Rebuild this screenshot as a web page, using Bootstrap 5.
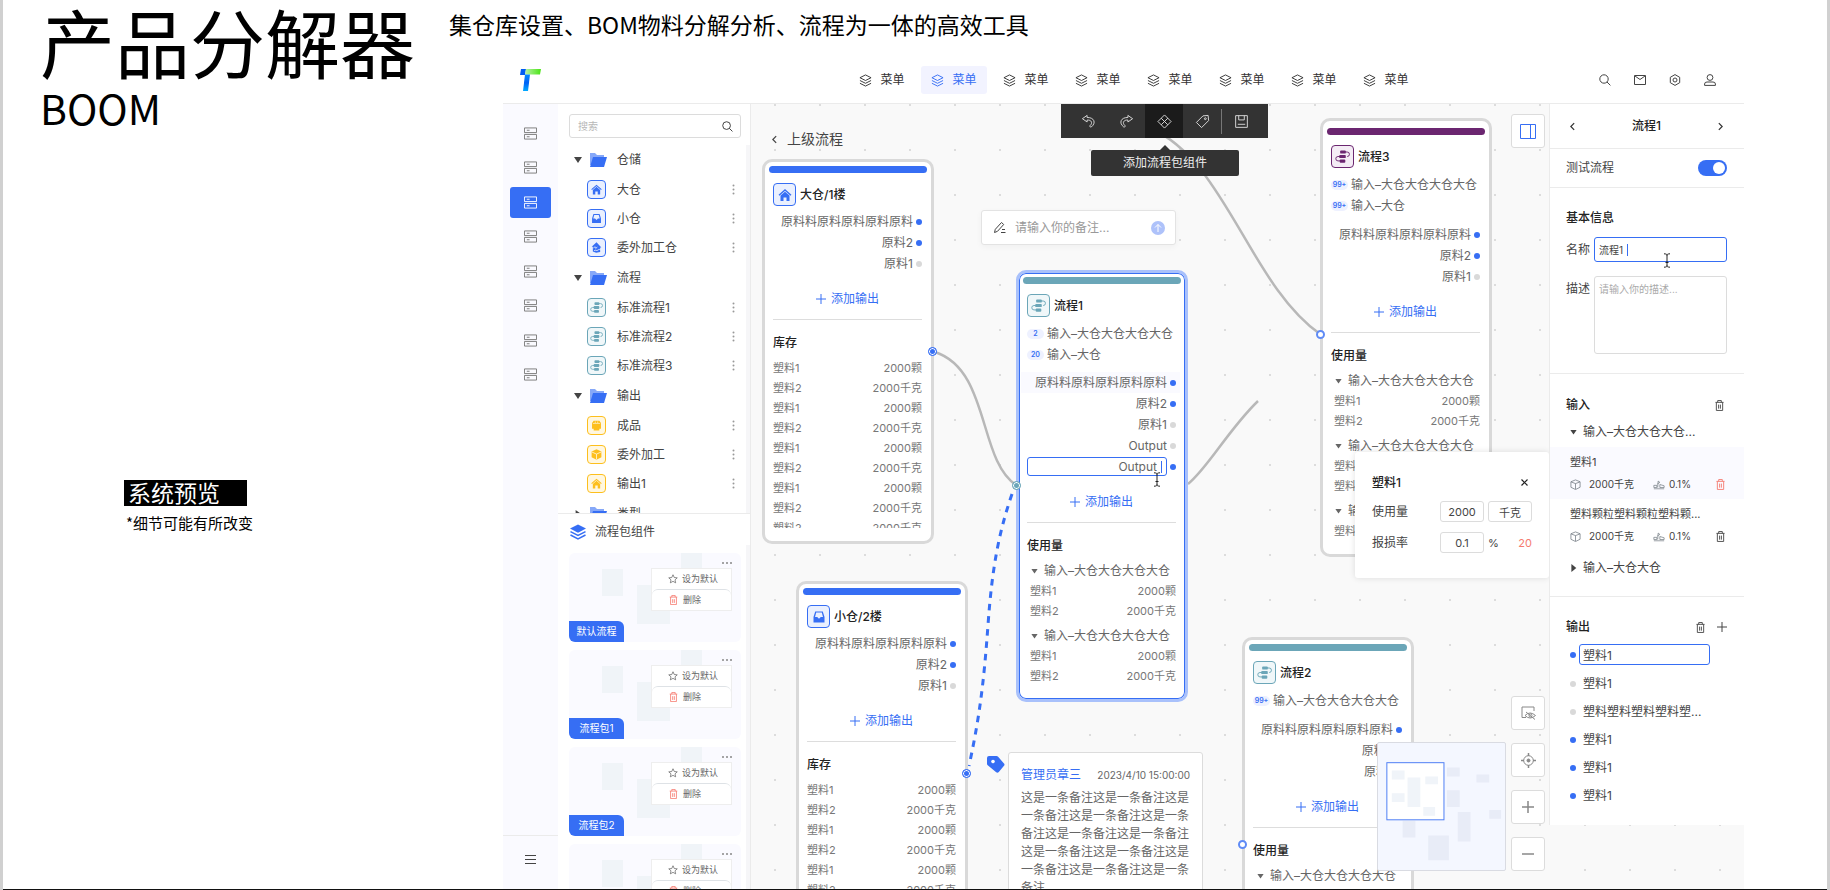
<!DOCTYPE html>
<html lang="zh-CN">
<head>
<meta charset="utf-8">
<meta name="viewport" content="width=device-width, initial-scale=1">
<title>产品分解器 BOOM</title>
<link href="https://cdn.jsdelivr.net/npm/bootstrap@5.3.0/dist/css/bootstrap.min.css" rel="stylesheet">
<style>
:root{--blue:#366ef4;--teal:#6ba6b8;--plum:#6b2670;--gold:#fdbf1d;--line:#ebebeb;--pale:#fafaff}
body{font-family:Inter,"Noto Sans CJK SC",sans-serif;font-size:12px;line-height:20px;color:#444;background:#fff}
.btn,.btn:hover{color:inherit;font-size:inherit;line-height:inherit}
svg{display:block;flex:none;fill:none;stroke:currentColor}
.page{border:solid #d0d0d0;border-width:0 3px}
.page::after{content:"";position:absolute;inset:auto 0 0;height:1px;background:#111;z-index:9}
.cjk{font-family:"Noto Sans CJK SC",sans-serif;color:#000}
.intro{width:446px;padding-left:37px}
.intro h1{font-size:75px;line-height:81px;font-weight:400}
.intro .sub{font-size:41px;line-height:52px}
.preview{margin:347px 0 0 84px}
.preview strong{width:123px;height:26px;padding-left:4px;font-size:23px;line-height:25px;font-weight:400;background:#000;color:#fff}
.preview small{font-size:15px;line-height:24px;padding:5px 0 0 2px}
.lead-line{height:57px;padding-top:8px;font-size:23px;line-height:32px}
.app{margin:0 83px 0 54px}
.top{height:47px;border-bottom:1px solid var(--line)}
.brand{width:346px;padding-left:17px}
.menu a{width:66px;height:28px;gap:8px;color:#333;border-radius:3px}
.menu a.on{background:#f2f3ff;color:var(--blue)}
.tools{gap:23px;padding-right:28px;color:#444}
.rail{width:55px;background:var(--pale);color:#777}
.rail .stack{height:272px;margin-top:14px}
.rail button{width:41px;height:31px;border-radius:3px}
.rail button.on{background:var(--blue);color:#fff}
.rail .foot{height:55px;padding-bottom:8px;border-top:1px solid var(--line);color:#444}
.side{width:193px;border-right:1px solid var(--line);background:#fff}
.search{height:24px;margin:10px 9px 7px 11px;padding:0 7px 0 8px;border:1px solid #dcdcdc;border-radius:3px;color:#333}
.search input{font-size:10px}
.plain{border:0;outline:0;background:none;padding:0;min-width:0;color:inherit}
.plain::placeholder{color:#b8b8b8;opacity:1}
.tree{height:369px;border-bottom:1px solid var(--line)}
.tree>div{margin:0 0 1px}
.tree .dir{height:30px;padding-left:16px}
.tree .dir .tri{width:8px;margin-right:7px}
.tree .dir svg.fold{margin-right:10px;stroke:none}
.tree .leaf{height:29px;padding:0 15px 0 29px}
.tree .leaf .tile{width:19px;height:19px;margin-right:11px}
.tree .leaf button{color:#999}
.tree .leaf button svg{stroke:none;fill:currentColor}
.track::after{content:"";position:absolute;right:0;top:0;bottom:0;width:4px;background:#f6f6f8}
.tri{display:inline-block;width:8px;height:6px;background:currentColor;clip-path:polygon(0 0,100% 0,50% 100%)}
.tri.shut{clip-path:polygon(20% 0,90% 50%,20% 100%);height:8px}
.tile{display:flex;align-items:center;justify-content:center;width:23px;height:23px;flex:none;border:1px solid currentColor;border-radius:4px}
.t-blue{color:var(--blue);background:#eaf0fe}.t-teal{color:var(--teal);background:#f0f7f9}.t-plum{color:var(--plum);background:#f4ecf5}.t-gold{color:var(--gold);background:#fff7e0}
.kit-head{height:31px;padding:4px 0 0 12px;gap:9px}
.kits{padding:8px 9px 0 11px}
.kit{height:89px;margin-bottom:8px;border-radius:6px;background:var(--pale)}
.kit .deco{position:absolute;inset:0;stroke:none;fill:#f0f4f8}
.kit .name{position:absolute;left:0;bottom:0;width:55px;height:21px;border-radius:0 6px 0 6px;background:var(--blue);color:#fff;font-size:10px;line-height:21px;text-align:center}
.kit .pop{position:absolute;left:82px;top:15px;width:81px;border:1px solid #eee;background:#fff;font-size:9px}
.kit .pop button{height:20px;padding-left:16px;gap:4px;color:#666;font-size:9px;line-height:20px}
.kit .pop button+button{height:21px;padding-left:17px;gap:5px}
.kit .more{position:absolute;right:9px;top:6px;color:#888}
.red{color:#f57b70}
.board{background:#f9f9f9 radial-gradient(circle at 1px 1px,#dcdcdc 1px,transparent 1px) 23px 0/45px 45px}
.back{position:absolute;left:21px;top:24px;gap:10px;font-size:14px;line-height:22px;color:#444}
.bar{position:absolute;left:310px;top:0;padding:0 8px;background:#333;color:#ddd;z-index:3}
.bar button{width:38px;height:34px}
.bar button.on{background:#1b1b1b}
.bar i{width:1px;height:25px;background:#777}
.tip{position:absolute;left:340px;top:46px;width:148px;height:26px;line-height:26px;text-align:center;background:#333;color:#eee;border-radius:2px;z-index:3}
.tip::before{content:"";position:absolute;left:69px;top:-5px;border:5px solid transparent;border-top:0;border-bottom-color:#333}
.wires{position:absolute;left:0;top:0}
.node{position:absolute;width:172px;padding:4px 4px 14px;border:3px solid #d9d9d9;border-radius:10px;background:#fff;color:#666}
.node.sel{border-color:#a9c1fb;box-shadow:inset 0 0 0 1px var(--blue)}
.node.tall{padding-top:7px}
.node .cap{height:7px;border-radius:4px}
.node .in{margin:0 5px 0 4px}
.node header{margin:10px 0 5px;gap:4px;color:#222;font-weight:500}
.node .src{height:21px;gap:3px}
.node header+.src{margin-top:6px}
.node .src+.out{margin-top:8px}
.node .src+.hot{margin-top:7px}
.pill{width:17px;height:10px;border-radius:5px;background:#eef1ff;color:var(--blue);font-size:7px;line-height:10px;font-weight:600;text-align:center}
.out{height:21px;gap:3px}
.out.hot{margin-left:-6px;margin-right:-4px;padding-right:4px;background:var(--pale)}
.dot{width:6px;height:6px;border-radius:50%;background:#d9d9d9;flex:none}
.dot.b{background:var(--blue)}
.out .box{height:19px;border:1px solid var(--blue);border-radius:3px;padding-right:9px}
.caret{position:absolute;width:1px;height:12px;background:var(--blue)}
.add,.add:hover{height:21px;margin-top:14px;gap:5px;color:var(--blue)}
.node hr{margin:10px 0 13px;border-color:#ddd;opacity:1}
.node h3,.panel h3{font-size:12px;line-height:20px;font-weight:500;color:#222;margin:0}
.node .clip{margin-top:5px;overflow:hidden}
.node table{width:100%;font-size:11px;color:#777}
.node td{padding:0;height:20px;line-height:20px}
.node td+td{text-align:right}
.node .use table{margin:0 0 5px 3px;width:calc(100% - 3px)}
.node .use .clip table:last-child{margin-bottom:0}
.grp{height:20px;gap:6px;padding-left:4px}
.grp .tri{width:7px;height:5px}
.port{position:absolute;width:9px;height:9px;border:1px solid var(--blue);border-radius:50%;background:var(--blue);box-shadow:inset 0 0 0 1px #fff}
.port.open{background:#fff;border-width:2px;border-color:#5f8bf6}
.port.teal{border-color:var(--teal);background:var(--teal)}
.note{position:absolute;left:230px;top:106px;width:195px;height:35px;padding:0 10px 0 11px;gap:9px;border:1px solid #e3e3e3;border-radius:3px;background:#fff;box-shadow:0 2px 6px #0000000a}
.note input::placeholder{color:#999}
.memo{position:absolute;left:257px;top:648px;width:195px;padding:12px;border:1px solid #dcdcdc;border-radius:3px;background:#fff;color:#666}
.memo time{font-size:10px}
.memo p{line-height:18px;padding-top:4px}
.memo-tag{position:absolute;left:236px;top:652px;stroke:none}
.sq,.sq:hover{width:34px;height:34px;border:1px solid #dcdcdc;border-radius:3px;background:#fff;color:#888}
.sq.tint{color:var(--blue);right:4px;top:10px}
.mid{place-items:center}
.dock{position:absolute;right:4px;bottom:19px;gap:5px}
.dock .col-btns{gap:13px}
.mini{width:129px;height:129px;border:1px solid #d9dbe2;border-radius:2px;background:#f4f7ff;stroke:none}
.tune{position:absolute;right:0;top:348px;width:194px;height:126px;padding:20px 17px 0;border-radius:3px;background:#fff;box-shadow:0 0 6px #0000001f;z-index:4}
.tune .cell{width:44px;height:21px;border:1px solid #dcdcdc;border-radius:3px;text-align:center;font-size:11px;padding:0;color:#444}
.tune .line{height:21px;margin-bottom:10px;gap:4px}
.tune .line:first-child{margin-bottom:8px}
.panel{width:195px;border-left:1px solid var(--line);background:#fff;min-height:721px}
.panel section{border-bottom:1px solid var(--line);padding:0 17px 0 16px}
.panel section:last-child{border:0}
.panel .h45{height:45px;color:#333}
.panel .h39{height:39px}
.sw{width:29px;height:16px;margin:0;appearance:none;border-radius:8px;background:var(--blue)}
.sw::after{content:"";display:block;width:12px;height:12px;margin:2px 0 0 15px;border-radius:50%;background:#fff}
.field{width:133px;border:1px solid #dcdcdc;border-radius:3px;padding:0 4px;font-size:10px;color:#444;outline:0;resize:none;background:#fff}
.field::placeholder{color:#aaa;opacity:1}
.field.on{border-color:var(--blue);height:25px}
textarea.field{height:78px;padding-top:2px}
.item{margin:0 -17px 0 -16px;padding:5px 19px 3px 20px;height:52px;font-size:11px}
.item .nums{font-size:10px;height:24px}
.item .qty{width:64px}
.outs{padding-top:7px}
.outs li{height:21px;margin-bottom:7px;gap:7px;padding-left:4px}
.outs li:first-child{margin-bottom:8px}
.outs .field{width:131px;height:21px;font-size:12px;margin-left:-4px;padding:0 3px}
.beam{position:absolute;stroke:#222;z-index:5}
</style>
</head>
<body>
<svg width="0" height="0" class="position-absolute" aria-hidden="true">
  <symbol id="server" viewBox="0 0 14 13"><path d="M.5.5h13v5H.5zM.5 7.500h13v5H.5zM3 3h3M3 10h3"/></symbol>
  <symbol id="layers" viewBox="0 0 14 14"><path d="M7 1l6 3-6 3-6-3zM1 7l6 3 6-3M1 10l6 3 6-3" stroke-linejoin="round"/></symbol>
  <symbol id="layersfill" viewBox="0 0 16 16"><path d="M8 .5L16 4.600 8 8.700 0 4.600z" fill="currentColor" stroke="none"/><path d="M.5 7.600L8 11.400l7.500-3.800M.5 11L8 14.800l7.500-3.800" stroke-width="1.500"/></symbol>
  <symbol id="search" viewBox="0 0 12 12"><circle cx="5" cy="5" r="4.200"/><path d="M8 8l3.400 3.400"/></symbol>
  <symbol id="home" viewBox="0 0 16 16"><path d="M2 8.200L8 3l6 5.200" stroke-width="1.400"/><path d="M3.500 8.500L8 4.700l4.500 3.800V14h-3v-3.500h-3V14h-3z" fill="currentColor" stroke="none"/></symbol>
  <symbol id="tray" viewBox="0 0 16 16"><path d="M4.200 2.500h7.600L13.500 8v5.500h-11V8z" stroke="none" fill="currentColor"/><path d="M5.200 3.600h5.600L12 8H9.800L8 9.800 6.200 8H4z" fill="#eaf0fe" stroke="none"/></symbol>
  <symbol id="outhome" viewBox="0 0 16 16"><path d="M8 1.500L2 7h1.500v6l4 1.500 5-1V8H14z" fill="currentColor" stroke="none"/><path d="M4 9l2-2 1 2 2-1.500M5 12c2-2 3 1 5-1s2 1 4-1" stroke="#eaf0fe"/></symbol>
  <symbol id="flow" viewBox="0 0 16 16"><g fill="currentColor" stroke="none"><rect x="5.500" y="1.500" width="6" height="3.400" rx="1"/><rect x="4.500" y="6.300" width="7" height="3.400" rx="1"/><rect x="5" y="11.200" width="6" height="3.400" rx="1"/></g><path d="M10 3.200h3a2.300 2.300 0 0 1 0 4.800M6 8H3.200a2.300 2.300 0 0 0 0 4.700H6"/></symbol>
  <symbol id="goods" viewBox="0 0 16 16"><path d="M4.500 2h7l2 3v7h-2v2h-7v-2h-2V5z" fill="currentColor" stroke="none"/><path d="M3.500 5.500h9M6.500 3v2M9.500 3v2" stroke="#fff7e0" stroke-width=".8"/></symbol>
  <symbol id="cube" viewBox="0 0 16 16"><path d="M8 1.500l6 2.800v7.200l-6 3-6-3V4.300z" fill="currentColor" stroke="none"/><path d="M2.500 5L8 7.500 13.500 5M8 7.500V14" stroke="#fff7e0"/></symbol>
  <symbol id="folder" viewBox="0 0 18 14"><path d="M1 0h5l2 2h7v10H1z" fill="#86a8f8"/><path d="M4 4h14l-3 10H1z" fill="#366ef4"/></symbol>
  <symbol id="vdots" viewBox="0 0 3 11"><circle cx="1.500" cy="1.500" r="1"/><circle cx="1.500" cy="5.500" r="1"/><circle cx="1.500" cy="9.500" r="1"/></symbol>
  <symbol id="star" viewBox="0 0 12 12"><path d="M6 .9l1.500 3.300 3.600.4-2.700 2.400.8 3.600L6 8.800l-3.200 1.800.8-3.600L.9 4.600l3.600-.4z" stroke-width=".9"/></symbol>
  <symbol id="trash" viewBox="0 0 10 12"><path d="M.5 2.500h9M3 2.500v-2h4v2M1.500 2.500v9h7v-9M4 5v4.500M6 5v4.500"/></symbol>
  <symbol id="left" viewBox="0 0 6 10"><path d="M5 1L1 5l4 4" stroke-width="1.500"/></symbol>
  <symbol id="plus" viewBox="0 0 10 10"><path d="M5 0v10M0 5h10"/></symbol>
  <symbol id="undo" viewBox="0 0 16 16"><path d="M6.500 1.500L1.500 5l5 3.500V6.500C11 6 13 9.500 9.500 12.500c-.5 1 .8 1.800 1.500 1.300C16.500 9.500 14 3.500 6.500 3.700z" stroke-linejoin="round"/></symbol>
  <symbol id="box" viewBox="0 0 12 12"><path d="M6 1l5 2v6l-5 2.500L1 9V3zM1.200 3.200L6 5l4.800-1.800M6 5v6" stroke-width=".8"/></symbol>
  <symbol id="loss" viewBox="0 0 14 12"><path d="M1 9.500V7h3.500v2.500zM5.500 9.500L6 2l2 1.500-3 2M8 6l5 1.500v2H8zM1 11h12" stroke-width=".8"/></symbol>
  <symbol id="beam" viewBox="0 0 8 15"><path d="M1 .8c2 0 3 .5 3 1.500 0-1 1-1.500 3-1.500M4 2v11M1 14.200c2 0 3-.5 3-1.500 0 1 1 1.500 3 1.500M2.500 9.500h3"/></symbol>
</svg>

<div class="page d-flex vh-100 overflow-hidden position-relative">
  <div class="intro cjk flex-shrink-0">
    <h1 class="m-0 text-nowrap">产品分解器</h1>
    <div class="sub">BOOM</div>
    <div class="preview d-flex flex-column text-nowrap"><strong>系统预览</strong><small>*细节可能有所改变</small></div>
  </div>

  <div class="flex-grow-1 d-flex flex-column" style="min-width:0">
    <p class="lead-line cjk m-0 flex-shrink-0 text-nowrap">集仓库设置、BOM物料分解分析、流程为一体的高效工具</p>
    <div class="app flex-grow-1 d-flex flex-column" style="min-height:0">
      <header class="top d-flex align-items-center flex-shrink-0">
        <a href="#" class="brand flex-shrink-0" aria-label="首页">
          <svg width="21" height="22" viewBox="0 0 21 22" stroke="none"><defs><linearGradient id="gr"><stop offset="0" stop-color="#b8f0a8"/><stop offset="1" stop-color="#4ae514"/></linearGradient><linearGradient id="bl" x2="0" y2="1"><stop offset="0" stop-color="#08f"/><stop offset=".5" stop-color="#0061f5"/><stop offset="1" stop-color="#00a9ff"/></linearGradient></defs><path d="M1 0h5L5 6H0z" fill="#005cf2" stroke="none"/><path d="M6 0h15l-1 5.500H5z" fill="url(#gr)" stroke="none"/><path d="M5 5.500h5L8 22H3z" fill="url(#bl)" stroke="none"/></svg>
        </a>
        <nav class="menu d-flex flex-grow-1" style="gap:6px">
          <a href="#" class="d-flex align-items-center justify-content-center text-decoration-none"><svg width="13" height="13"><use href="#layers"/></svg>菜单</a>
          <a href="#" class="on d-flex align-items-center justify-content-center text-decoration-none"><svg width="13" height="13"><use href="#layers"/></svg>菜单</a>
          <a href="#" class="d-flex align-items-center justify-content-center text-decoration-none"><svg width="13" height="13"><use href="#layers"/></svg>菜单</a>
          <a href="#" class="d-flex align-items-center justify-content-center text-decoration-none"><svg width="13" height="13"><use href="#layers"/></svg>菜单</a>
          <a href="#" class="d-flex align-items-center justify-content-center text-decoration-none"><svg width="13" height="13"><use href="#layers"/></svg>菜单</a>
          <a href="#" class="d-flex align-items-center justify-content-center text-decoration-none"><svg width="13" height="13"><use href="#layers"/></svg>菜单</a>
          <a href="#" class="d-flex align-items-center justify-content-center text-decoration-none"><svg width="13" height="13"><use href="#layers"/></svg>菜单</a>
          <a href="#" class="d-flex align-items-center justify-content-center text-decoration-none"><svg width="13" height="13"><use href="#layers"/></svg>菜单</a>
        </nav>
        <div class="tools d-flex align-items-center">
          <button class="btn p-0 border-0" aria-label="搜索"><svg width="12" height="12"><use href="#search"/></svg></button>
          <button class="btn p-0 border-0" aria-label="邮件"><svg width="12" height="12" viewBox="0 0 12 12"><path d="M.5 1.500h11v9H.5zM1 2l5 3.500L11 2"/></svg></button>
          <button class="btn p-0 border-0" aria-label="设置"><svg width="12" height="12" viewBox="0 0 12 12"><path d="M6 .6l4.700 2.700v5.400L6 11.400 1.300 8.700V3.300z"/><circle cx="6" cy="6" r="2"/></svg></button>
          <button class="btn p-0 border-0" aria-label="用户"><svg width="12" height="12" viewBox="0 0 12 12"><circle cx="6" cy="3.500" r="2.900"/><path d="M.6 11.400V10Q.6 8 3 8h6q2.400 0 2.400 2v1.400z"/></svg></button>
        </div>
      </header>

      <div class="d-flex flex-grow-1" style="min-height:0">
        <nav class="rail d-flex flex-column align-items-center justify-content-between flex-shrink-0">
          <div class="stack d-flex flex-column justify-content-between">
            <button class="mid btn p-0 border-0 d-grid" aria-label="模块1"><svg width="13" height="13"><use href="#server"/></svg></button>
            <button class="mid btn p-0 border-0 d-grid" aria-label="模块2"><svg width="13" height="13"><use href="#server"/></svg></button>
            <button class="on mid btn p-0 border-0 d-grid" aria-label="模块3"><svg width="13" height="13"><use href="#server"/></svg></button>
            <button class="mid btn p-0 border-0 d-grid" aria-label="模块4"><svg width="13" height="13"><use href="#server"/></svg></button>
            <button class="mid btn p-0 border-0 d-grid" aria-label="模块5"><svg width="13" height="13"><use href="#server"/></svg></button>
            <button class="mid btn p-0 border-0 d-grid" aria-label="模块6"><svg width="13" height="13"><use href="#server"/></svg></button>
            <button class="mid btn p-0 border-0 d-grid" aria-label="模块7"><svg width="13" height="13"><use href="#server"/></svg></button>
            <button class="mid btn p-0 border-0 d-grid" aria-label="模块8"><svg width="13" height="13"><use href="#server"/></svg></button>
          </div>
          <div class="foot w-100 d-flex justify-content-center align-items-center"><button class="mid btn p-0 border-0 d-grid" aria-label="展开"><svg width="11" height="9" viewBox="0 0 11 9"><path d="M0 .5h11M0 4.500h11M0 8.500h11"/></svg></button></div>
        </nav>

        <aside class="side d-flex flex-column flex-shrink-0 overflow-hidden">
          <div class="search d-flex align-items-center flex-shrink-0"><input class="plain flex-grow-1" type="search" placeholder="搜索" aria-label="搜索"><svg width="11" height="11"><use href="#search"/></svg></div>
          <div class="tree track position-relative overflow-hidden flex-shrink-0">
            <div>
              <div class="dir d-flex align-items-center"><i class="tri"></i><svg class="fold" width="18" height="14"><use href="#folder"/></svg>仓储</div>
              <div class="leaf d-flex align-items-center"><span class="tile t-blue"><svg width="13" height="13"><use href="#home"/></svg></span>大仓<button class="btn p-0 border-0 ms-auto" aria-label="更多"><svg width="3" height="11"><use href="#vdots"/></svg></button></div>
              <div class="leaf d-flex align-items-center"><span class="tile t-blue"><svg width="13" height="13"><use href="#tray"/></svg></span>小仓<button class="btn p-0 border-0 ms-auto" aria-label="更多"><svg width="3" height="11"><use href="#vdots"/></svg></button></div>
              <div class="leaf d-flex align-items-center"><span class="tile t-blue"><svg width="13" height="13"><use href="#outhome"/></svg></span>委外加工仓<button class="btn p-0 border-0 ms-auto" aria-label="更多"><svg width="3" height="11"><use href="#vdots"/></svg></button></div>
            </div>
            <div>
              <div class="dir d-flex align-items-center"><i class="tri"></i><svg class="fold" width="18" height="14"><use href="#folder"/></svg>流程</div>
              <div class="leaf d-flex align-items-center"><span class="tile t-teal"><svg width="13" height="13"><use href="#flow"/></svg></span>标准流程1<button class="btn p-0 border-0 ms-auto" aria-label="更多"><svg width="3" height="11"><use href="#vdots"/></svg></button></div>
              <div class="leaf d-flex align-items-center"><span class="tile t-teal"><svg width="13" height="13"><use href="#flow"/></svg></span>标准流程2<button class="btn p-0 border-0 ms-auto" aria-label="更多"><svg width="3" height="11"><use href="#vdots"/></svg></button></div>
              <div class="leaf d-flex align-items-center"><span class="tile t-teal"><svg width="13" height="13"><use href="#flow"/></svg></span>标准流程3<button class="btn p-0 border-0 ms-auto" aria-label="更多"><svg width="3" height="11"><use href="#vdots"/></svg></button></div>
            </div>
            <div>
              <div class="dir d-flex align-items-center"><i class="tri"></i><svg class="fold" width="18" height="14"><use href="#folder"/></svg>输出</div>
              <div class="leaf d-flex align-items-center"><span class="tile t-gold"><svg width="13" height="13"><use href="#goods"/></svg></span>成品<button class="btn p-0 border-0 ms-auto" aria-label="更多"><svg width="3" height="11"><use href="#vdots"/></svg></button></div>
              <div class="leaf d-flex align-items-center"><span class="tile t-gold"><svg width="13" height="13"><use href="#cube"/></svg></span>委外加工<button class="btn p-0 border-0 ms-auto" aria-label="更多"><svg width="3" height="11"><use href="#vdots"/></svg></button></div>
              <div class="leaf d-flex align-items-center"><span class="tile t-gold"><svg width="13" height="13"><use href="#home"/></svg></span>输出1<button class="btn p-0 border-0 ms-auto" aria-label="更多"><svg width="3" height="11"><use href="#vdots"/></svg></button></div>
            </div>
            <div class="dir d-flex align-items-center"><i class="tri shut"></i><svg class="fold" width="18" height="14"><use href="#folder"/></svg>类型</div>
          </div>
          <div class="kit-head d-flex align-items-center flex-shrink-0"><svg width="16" height="16" style="color:var(--blue)"><use href="#layersfill"/></svg>流程包组件</div>
          <div class="kits track position-relative flex-grow-1 overflow-hidden">
            <div class="kit position-relative">
              <svg class="deco" width="172" height="89"><path d="M33 16h21v27H33zM112 0h21v20h-21zM68 32h33v39H68z"/></svg>
              <button class="more btn p-0 border-0" aria-label="更多"><svg width="10" height="8" viewBox="0 0 10 8"><path d="M0 4h2M4 4h2M8 4h2" stroke-width="1.500"/></svg></button>
              <div class="pop"><button class="btn border-0 py-0 pe-0 d-flex align-items-center w-100"><svg width="10" height="10"><use href="#star"/></svg>设为默认</button><button class="btn border-0 py-0 pe-0 d-flex align-items-center w-100 border-top"><svg class="red" width="9" height="10"><use href="#trash"/></svg>删除</button></div>
              <span class="name">默认流程</span>
            </div>
            <div class="kit position-relative">
              <svg class="deco" width="172" height="89"><path d="M33 16h21v27H33zM112 0h21v20h-21zM68 32h33v39H68z"/></svg>
              <button class="more btn p-0 border-0" aria-label="更多"><svg width="10" height="8" viewBox="0 0 10 8"><path d="M0 4h2M4 4h2M8 4h2" stroke-width="1.500"/></svg></button>
              <div class="pop"><button class="btn border-0 py-0 pe-0 d-flex align-items-center w-100"><svg width="10" height="10"><use href="#star"/></svg>设为默认</button><button class="btn border-0 py-0 pe-0 d-flex align-items-center w-100 border-top"><svg class="red" width="9" height="10"><use href="#trash"/></svg>删除</button></div>
              <span class="name">流程包1</span>
            </div>
            <div class="kit position-relative">
              <svg class="deco" width="172" height="89"><path d="M33 16h21v27H33zM112 0h21v20h-21zM68 32h33v39H68z"/></svg>
              <button class="more btn p-0 border-0" aria-label="更多"><svg width="10" height="8" viewBox="0 0 10 8"><path d="M0 4h2M4 4h2M8 4h2" stroke-width="1.500"/></svg></button>
              <div class="pop"><button class="btn border-0 py-0 pe-0 d-flex align-items-center w-100"><svg width="10" height="10"><use href="#star"/></svg>设为默认</button><button class="btn border-0 py-0 pe-0 d-flex align-items-center w-100 border-top"><svg class="red" width="9" height="10"><use href="#trash"/></svg>删除</button></div>
              <span class="name">流程包2</span>
            </div>
            <div class="kit position-relative">
              <svg class="deco" width="172" height="89"><path d="M33 16h21v27H33zM112 0h21v20h-21zM68 32h33v39H68z"/></svg>
              <button class="more btn p-0 border-0" aria-label="更多"><svg width="10" height="8" viewBox="0 0 10 8"><path d="M0 4h2M4 4h2M8 4h2" stroke-width="1.500"/></svg></button>
              <div class="pop"><button class="btn border-0 py-0 pe-0 d-flex align-items-center w-100"><svg width="10" height="10"><use href="#star"/></svg>设为默认</button><button class="btn border-0 py-0 pe-0 d-flex align-items-center w-100 border-top"><svg class="red" width="9" height="10"><use href="#trash"/></svg>删除</button></div>
            </div>
          </div>
        </aside>

        <div class="board d-flex flex-grow-1 align-items-start overflow-hidden">
          <main class="position-relative flex-grow-1 h-100 overflow-hidden">
            <a href="#" class="back d-flex align-items-center text-decoration-none"><svg width="5" height="9"><use href="#left"/></svg>上级流程</a>

            <svg class="wires" width="798" height="785" viewBox="751 104 798 785">
              <path d="M1150 128C1225 160 1250 285 1320 334M1188 484C1208 468 1228 430 1258 401M935 352C990 370 978 460 1016 485" stroke="#b8b8b8" stroke-width="2.500"/>
              <path d="M1012 494C998 535 992 570 988 625S980 715 969 766" stroke="#366ef4" stroke-width="3" stroke-dasharray="6.500 6"/>
            </svg>

            <div class="bar d-flex align-items-center">
              <button class="mid btn p-0 border-0 rounded-0 d-grid" aria-label="撤销"><svg width="15" height="15"><use href="#undo"/></svg></button>
              <button class="mid btn p-0 border-0 rounded-0 d-grid" aria-label="重做"><svg width="15" height="15" viewBox="0 0 16 16"><path d="M9.500 1.500l5 3.500-5 3.500V6.500C5 6 3 9.500 6.500 12.500c.5 1-.8 1.800-1.500 1.300C-.5 9.500 2 3.500 9.500 3.700z" stroke-linejoin="round"/></svg></button>
              <button class="on mid btn p-0 border-0 rounded-0 d-grid" aria-label="添加流程包组件"><svg width="15" height="15" viewBox="0 0 16 16"><path d="M8 1l7 7-7 7-7-7zM4.500 4.500l7 7M11.500 4.500l-7 7"/></svg></button>
              <button class="mid btn p-0 border-0 rounded-0 d-grid" aria-label="标签"><svg width="15" height="15" viewBox="0 0 16 16"><path d="M8.500 2L14 1.500 14.500 7 7 14.500 1.500 9z" stroke-linejoin="round"/><circle cx="11" cy="5" r="1"/></svg></button>
              <i></i>
              <button class="mid btn p-0 border-0 rounded-0 d-grid" aria-label="保存"><svg width="13" height="13" viewBox="0 0 14 14"><path d="M.7.700h12.600v12.600H.7zM4 .7v4.600h6V.7M3 10h8"/></svg></button>
            </div>
            <div class="tip" role="tooltip">添加流程包组件</div>

            <label class="note d-flex align-items-center"><svg width="13" height="13" viewBox="0 0 13 13"><path d="M1.500 11.500l.8-3.200L8.500 1.500l2.200 2L4.500 10.300zM8 11.500h4.500M9 8.500h3"/></svg><input class="plain flex-grow-1" placeholder="请输入你的备注..."><svg width="14" height="14" viewBox="0 0 14 14"><circle cx="7" cy="7" r="7" fill="#aec2fa" stroke="none"/><path d="M7 11V3.500M4 6.500l3-3 3 3" stroke="#fff"/></svg></label>

            <article class="node" style="left:11px;top:55px;height:385px">
              <div class="cap" style="background:var(--blue)"></div>
              <div class="in">
                <header class="d-flex align-items-center"><span class="tile t-blue"><svg width="16" height="16"><use href="#home"/></svg></span>大仓/1楼</header>
                <div class="out d-flex align-items-center justify-content-end">原料料原料原料原料原料<i class="dot b"></i></div>
                <div class="out d-flex align-items-center justify-content-end">原料2<i class="dot b"></i></div>
                <div class="out d-flex align-items-center justify-content-end">原料1<i class="dot"></i></div>
                <button class="add btn w-100 p-0 border-0 d-flex align-items-center justify-content-center"><svg width="10" height="10"><use href="#plus"/></svg>添加输出</button>
                <hr>
                <h3>库存</h3>
                <div class="clip" style="height:170px"><table>
                  <tr><td>塑料1</td><td>2000颗</td></tr><tr><td>塑料2</td><td>2000千克</td></tr>
                  <tr><td>塑料1</td><td>2000颗</td></tr><tr><td>塑料2</td><td>2000千克</td></tr>
                  <tr><td>塑料1</td><td>2000颗</td></tr><tr><td>塑料2</td><td>2000千克</td></tr>
                  <tr><td>塑料1</td><td>2000颗</td></tr><tr><td>塑料2</td><td>2000千克</td></tr>
                  <tr><td>塑料2</td><td>2000千克</td></tr>
                </table></div>
              </div>
              <i class="port" style="right:-6px;top:185px"></i>
            </article>

            <article class="node" style="left:45px;top:477px;height:385px">
              <div class="cap" style="background:var(--blue)"></div>
              <div class="in">
                <header class="d-flex align-items-center"><span class="tile t-blue"><svg width="16" height="16"><use href="#tray"/></svg></span>小仓/2楼</header>
                <div class="out d-flex align-items-center justify-content-end">原料料原料原料原料原料<i class="dot b"></i></div>
                <div class="out d-flex align-items-center justify-content-end">原料2<i class="dot b"></i></div>
                <div class="out d-flex align-items-center justify-content-end">原料1<i class="dot"></i></div>
                <button class="add btn w-100 p-0 border-0 d-flex align-items-center justify-content-center"><svg width="10" height="10"><use href="#plus"/></svg>添加输出</button>
                <hr>
                <h3>库存</h3>
                <div class="clip" style="height:170px"><table>
                  <tr><td>塑料1</td><td>2000颗</td></tr><tr><td>塑料2</td><td>2000千克</td></tr>
                  <tr><td>塑料1</td><td>2000颗</td></tr><tr><td>塑料2</td><td>2000千克</td></tr>
                  <tr><td>塑料1</td><td>2000颗</td></tr><tr><td>塑料2</td><td>2000千克</td></tr>
                </table></div>
              </div>
              <i class="port" style="right:-6px;top:185px"></i>
            </article>

            <article class="node sel" style="left:265px;top:166px;height:432px">
              <div class="cap" style="background:var(--teal)"></div>
              <div class="in use">
                <header class="d-flex align-items-center"><span class="tile t-teal"><svg width="15" height="15"><use href="#flow"/></svg></span>流程1</header>
                <div class="src d-flex align-items-center"><span class="pill">2</span>输入–大仓大仓大仓大仓</div>
                <div class="src d-flex align-items-center"><span class="pill">20</span>输入–大仓</div>
                <div class="out hot d-flex align-items-center justify-content-end">原料料原料原料原料原料<i class="dot b"></i></div>
                <div class="out d-flex align-items-center justify-content-end">原料2<i class="dot b"></i></div>
                <div class="out d-flex align-items-center justify-content-end">原料1<i class="dot"></i></div>
                <div class="out d-flex align-items-center justify-content-end">Output<i class="dot"></i></div>
                <div class="out d-flex align-items-center justify-content-end position-relative"><input class="plain box flex-grow-1 text-end" value="Output" aria-label="输出名称"><i class="caret" style="right:14px"></i><i class="dot b"></i></div>
                <button class="add btn w-100 p-0 border-0 d-flex align-items-center justify-content-center"><svg width="10" height="10"><use href="#plus"/></svg>添加输出</button>
                <hr>
                <h3>使用量</h3>
                <div class="clip">
                  <div class="grp d-flex align-items-center"><i class="tri"></i>输入–大仓大仓大仓大仓</div>
                  <table><tr><td>塑料1</td><td>2000颗</td></tr><tr><td>塑料2</td><td>2000千克</td></tr></table>
                  <div class="grp d-flex align-items-center"><i class="tri"></i>输入–大仓大仓大仓大仓</div>
                  <table><tr><td>塑料1</td><td>2000颗</td></tr><tr><td>塑料2</td><td>2000千克</td></tr></table>
                </div>
              </div>
              <i class="port teal" style="left:-7px;top:208px"></i>
            </article>
            <svg class="beam" width="8" height="15" style="left:402px;top:368px"><use href="#beam"/></svg>

            <article class="node tall" style="left:569px;top:14px;height:439px">
              <div class="cap" style="background:var(--plum)"></div>
              <div class="in use">
                <header class="d-flex align-items-center"><span class="tile t-plum"><svg width="15" height="15"><use href="#flow"/></svg></span>流程3</header>
                <div class="src d-flex align-items-center"><span class="pill">99+</span>输入–大仓大仓大仓大仓</div>
                <div class="src d-flex align-items-center"><span class="pill">99+</span>输入–大仓</div>
                <div class="out d-flex align-items-center justify-content-end">原料料原料原料原料原料<i class="dot b"></i></div>
                <div class="out d-flex align-items-center justify-content-end">原料2<i class="dot b"></i></div>
                <div class="out d-flex align-items-center justify-content-end">原料1<i class="dot"></i></div>
                <button class="add btn w-100 p-0 border-0 d-flex align-items-center justify-content-center"><svg width="10" height="10"><use href="#plus"/></svg>添加输出</button>
                <hr>
                <h3>使用量</h3>
                <div class="clip" style="height:171px">
                  <div class="grp d-flex align-items-center"><i class="tri"></i>输入–大仓大仓大仓大仓</div>
                  <table><tr><td>塑料1</td><td>2000颗</td></tr><tr><td>塑料2</td><td>2000千克</td></tr></table>
                  <div class="grp d-flex align-items-center"><i class="tri"></i>输入–大仓大仓大仓大仓</div>
                  <table><tr><td>塑料1</td><td></td></tr><tr><td>塑料2</td><td></td></tr></table>
                  <div class="grp d-flex align-items-center"><i class="tri"></i>输入–大仓</div>
                  <table><tr><td>塑料1</td><td></td></tr></table>
                </div>
              </div>
              <i class="port open" style="left:-7px;top:209px"></i>
            </article>

            <article class="node" style="left:491px;top:533px;height:400px">
              <div class="cap" style="background:var(--teal)"></div>
              <div class="in use">
                <header class="d-flex align-items-center"><span class="tile t-teal"><svg width="15" height="15"><use href="#flow"/></svg></span>流程2</header>
                <div class="src d-flex align-items-center"><span class="pill">99+</span>输入–大仓大仓大仓大仓</div>
                <div class="out d-flex align-items-center justify-content-end">原料料原料原料原料原料<i class="dot b"></i></div>
                <div class="out d-flex align-items-center justify-content-end">原料2<i class="dot b"></i></div>
                <div class="out d-flex align-items-center justify-content-end">原料1<i class="dot"></i></div>
                <button class="add btn w-100 p-0 border-0 d-flex align-items-center justify-content-center"><svg width="10" height="10"><use href="#plus"/></svg>添加输出</button>
                <hr>
                <h3>使用量</h3>
                <div class="clip"><div class="grp d-flex align-items-center"><i class="tri"></i>输入–大仓大仓大仓大仓</div></div>
              </div>
              <i class="port open" style="left:-7px;top:200px"></i>
            </article>

            <svg class="memo-tag" width="18" height="18" viewBox="0 0 18 18"><path d="M2 0h7.500q1 0 1.600.7L17 7.500q1 1.200 0 2.300L11.800 16q-1.300 1.200-2.600.2L1 9.500Q0 8.800 0 8V2q0-2 2-2z" fill="#366ef4"/><circle cx="6" cy="5.500" r="1.800" fill="#fff"/></svg>
            <article class="memo">
              <div class="d-flex align-items-center justify-content-between"><a href="#" class="text-decoration-none" style="color:var(--blue)">管理员章三</a><time>2023/4/10 15:00:00</time></div>
              <p class="m-0">这是一条备注这是一条备注这是一条备注这是一条备注这是一条备注这是一条备注这是一条备注这是一条备注这是一条备注这是一条备注这是一条备注这是一条备注</p>
            </article>

            <button class="sq tint mid btn p-0 d-grid position-absolute" aria-label="侧栏"><svg width="16" height="15" viewBox="0 0 16 15"><path d="M.5.5h15v14H.5zM10.500.5v14"/></svg></button>

            <div class="dock d-flex align-items-end">
              <svg class="mini" viewBox="0 0 129 129"><path fill="#e8ecf7" d="M70 25h13v9H70zM100 32h13v8h-13zM70 48h13v17H70zM81 70h13v30H81zM113 68h12v9h-12zM25 79h13v17H25zM51 94h21v25H51z"/><rect x="9" y="20" width="58" height="58" fill="#fff" stroke="#4d7ef5"/><path fill="#f0f4f9" d="M14 28h13v9H14zM14 51h13v9H14zM30 35h13v30H30zM48 34h13v8H48zM46 65h12v9H46z"/></svg>
              <div class="col-btns d-flex flex-column">
                <button class="sq mid btn p-0 d-grid" aria-label="隐藏小地图"><svg width="15" height="15" viewBox="0 0 15 15"><path d="M5 11.500H1V1h12v4"/><path d="M4 9.500q5-5 10.500 0-5.500 5-10.500 0zM5 6l9 7.500"/><circle cx="9.500" cy="9.500" r="1.500"/></svg></button>
                <button class="sq mid btn p-0 d-grid" aria-label="定位"><svg width="15" height="15" viewBox="0 0 15 15"><circle cx="7.500" cy="7.500" r="4.800"/><circle cx="7.500" cy="7.500" r="1.500" fill="currentColor"/><path d="M7.500 0v3M7.500 12v3M0 7.500h3M12 7.500h3" stroke-width="1.500"/></svg></button>
                <button class="sq mid btn p-0 d-grid" aria-label="放大"><svg width="12" height="12" viewBox="0 0 12 12"><path d="M6 0v12M0 6h12" stroke-width="1.500"/></svg></button>
                <button class="sq mid btn p-0 d-grid" aria-label="缩小"><svg width="12" height="12" viewBox="0 0 12 12"><path d="M0 6h12" stroke-width="1.500"/></svg></button>
              </div>
            </div>

            <form class="tune">
              <div class="line d-flex align-items-center justify-content-between" style="color:#222;font-weight:500">塑料1<button type="button" class="btn p-0 border-0 me-1" aria-label="关闭"><svg width="7" height="7" viewBox="0 0 7 7"><path d="M.5.5l6 6M6.500.5l-6 6" stroke-width="1.200"/></svg></button></div>
              <div class="line d-flex align-items-center"><label for="qty" class="me-auto">使用量</label><input id="qty" class="cell" value="2000"><input class="cell" value="千克" aria-label="单位"></div>
              <div class="line d-flex align-items-center"><label for="rate" class="me-auto">报损率</label><input id="rate" class="cell" value="0.1"><span class="d-flex justify-content-between" style="width:44px;font-size:11px">%<span class="red">20</span></span></div>
            </form>
          </main>

          <aside class="panel flex-shrink-0">
            <section class="h45 d-flex align-items-center justify-content-between"><button class="btn p-0 border-0 ms-1" aria-label="上一个"><svg width="5" height="9"><use href="#left"/></svg></button><h3>流程1</h3><button class="btn p-0 border-0 me-1" aria-label="下一个"><svg width="5" height="9" viewBox="0 0 6 10"><path d="M1 1l4 4-4 4" stroke-width="1.500"/></svg></button></section>
            <section class="h39 d-flex align-items-center justify-content-between"><label for="test">测试流程</label><input id="test" class="sw" type="checkbox" role="switch" checked></section>
            <section class="position-relative" style="padding-top:20px;padding-bottom:19px">
              <h3>基本信息</h3>
              <div class="d-flex align-items-center justify-content-between position-relative" style="margin:9px 0 14px"><label for="nm">名称</label><input id="nm" class="field on" value="流程1"><i class="caret" style="left:61px"></i></div>
              <div class="d-flex justify-content-between"><label for="ds" style="padding-top:3px">描述</label><textarea id="ds" class="field" placeholder="请输入你的描述..."></textarea></div>
              <svg class="beam" width="8" height="15" style="left:113px;top:65px"><use href="#beam"/></svg>
            </section>
            <section style="padding-top:21px;height:223px">
              <div class="d-flex align-items-center justify-content-between"><h3>输入</h3><button class="btn p-0 border-0" style="margin-right:3px" aria-label="删除"><svg width="9" height="11"><use href="#trash"/></svg></button></div>
              <div class="grp d-flex align-items-center" style="margin:7px 0 5px"><i class="tri"></i>输入–大仓大仓大仓...</div>
              <div class="item" style="background:var(--pale)">塑料1
                <div class="nums d-flex align-items-center"><svg width="11" height="11" class="me-1 text-secondary"><use href="#box"/></svg><span class="qty ms-1">2000千克</span><svg width="12" height="11" class="me-1 text-secondary"><use href="#loss"/></svg>0.1%<button class="btn p-0 border-0 ms-auto red" aria-label="删除"><svg width="9" height="11"><use href="#trash"/></svg></button></div>
              </div>
              <div class="item">塑料颗粒塑料颗粒塑料颗...
                <div class="nums d-flex align-items-center"><svg width="11" height="11" class="me-1 text-secondary"><use href="#box"/></svg><span class="qty ms-1">2000千克</span><svg width="12" height="11" class="me-1 text-secondary"><use href="#loss"/></svg>0.1%<button class="btn p-0 border-0 ms-auto" aria-label="删除"><svg width="9" height="11"><use href="#trash"/></svg></button></div>
              </div>
              <div class="grp d-flex align-items-center" style="margin-top:7px"><i class="tri shut" style="height:8px"></i>输入–大仓大仓</div>
            </section>
            <section style="padding-top:20px">
              <div class="d-flex align-items-center"><h3 class="me-auto">输出</h3><button class="btn p-0 border-0" style="margin-right:12px" aria-label="删除"><svg width="9" height="11"><use href="#trash"/></svg></button><button class="btn p-0 border-0" aria-label="添加"><svg width="10" height="10"><use href="#plus"/></svg></button></div>
              <ul class="outs list-unstyled m-0">
                <li class="d-flex align-items-center"><i class="dot b"></i><input class="field on" value="塑料1" aria-label="输出名称"></li>
                <li class="d-flex align-items-center"><i class="dot"></i>塑料1</li>
                <li class="d-flex align-items-center"><i class="dot"></i>塑料塑料塑料塑料塑...</li>
                <li class="d-flex align-items-center"><i class="dot b"></i>塑料1</li>
                <li class="d-flex align-items-center"><i class="dot b"></i>塑料1</li>
                <li class="d-flex align-items-center"><i class="dot b"></i>塑料1</li>
              </ul>
            </section>
          </aside>
        </div>
      </div>
    </div>
  </div>
</div>
<script src="https://cdn.jsdelivr.net/npm/bootstrap@5.3.0/dist/js/bootstrap.bundle.min.js"></script>
</body>
</html>
